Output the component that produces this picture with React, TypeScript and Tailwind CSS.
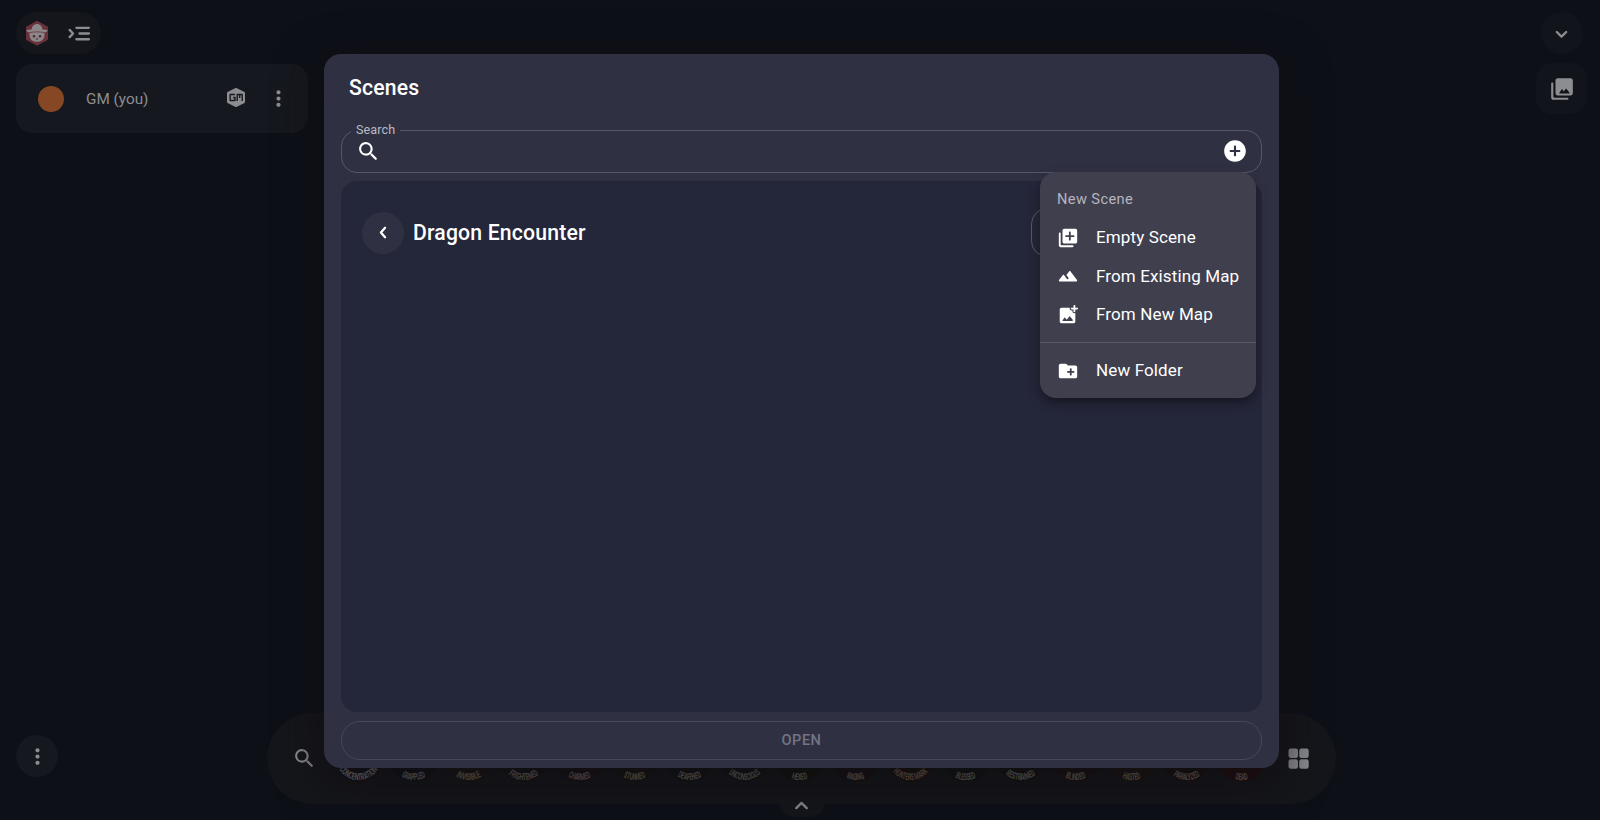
import type { ReactNode } from 'react';

const icons = {
  search:
    'M15.5 14h-.79l-.28-.27c1.2-1.4 1.82-3.31 1.48-5.34-.47-2.78-2.79-5-5.59-5.34-4.23-.52-7.79 3.04-7.27 7.27.34 2.8 2.56 5.12 5.34 5.59 2.03.34 3.94-.28 5.34-1.48l.27.28v.79l4.25 4.25c.41.41 1.08.41 1.49 0 .41-.41.41-1.08 0-1.49L15.5 14zm-6 0C7.01 14 5 11.99 5 9.5S7.01 5 9.5 5 14 7.01 14 9.5 11.99 14 9.5 14z',
  addCircle:
    'M12 2C6.48 2 2 6.48 2 12s4.48 10 10 10 10-4.48 10-10S17.52 2 12 2zm4 11h-3v3c0 .55-.45 1-1 1s-1-.45-1-1v-3H8c-.55 0-1-.45-1-1s.45-1 1-1h3V8c0-.55.45-1 1-1s1 .45 1 1v3h3c.55 0 1 .45 1 1s-.45 1-1 1z',
  libraryAdd:
    'M3 6c-.55 0-1 .45-1 1v13c0 1.1.9 2 2 2h13c.55 0 1-.45 1-1s-.45-1-1-1H5c-.55 0-1-.45-1-1V7c0-.55-.45-1-1-1zm17-4H8c-1.1 0-2 .9-2 2v12c0 1.1.9 2 2 2h12c1.1 0 2-.9 2-2V4c0-1.1-.9-2-2-2zm-2 9h-3v3c0 .55-.45 1-1 1s-1-.45-1-1v-3h-3c-.55 0-1-.45-1-1s.45-1 1-1h3V6c0-.55.45-1 1-1s1 .45 1 1v3h3c.55 0 1 .45 1 1s-.45 1-1 1z',
  terrain:
    'M13.2 7.07L10.25 11l2.25 3c.33.44.24 1.07-.2 1.4-.44.33-1.07.25-1.4-.2-1.05-1.4-2.31-3.07-3.1-4.14-.4-.53-1.2-.53-1.6 0l-4 5.33c-.49.67-.02 1.61.8 1.61h18c.82 0 1.29-.94.8-1.6l-7-9.33c-.4-.54-1.2-.54-1.6 0z',
  addPhoto:
    'M22 4h-2V2c0-.55-.45-1-1-1s-1 .45-1 1v2h-2c-.55 0-1 .45-1 1s.45 1 1 1h2v2c0 .55.45 1 1 1s1-.45 1-1V6h2c.55 0 1-.45 1-1s-.45-1-1-1zM19 10.200c-1.200 0-2.200-1-2.200-2.200v-.800H16c-1.200 0-2.200-1-2.200-2.200 0-.400.100-.700.200-1H5c-1.100 0-2 .9-2 2v13c0 1.100.9 2 2 2h13c1.100 0 2-.9 2-2V9.950c-.300.150-.650.250-1 .250zM16.960 18.500H6.500c-.410 0-.650-.470-.400-.800l2-2.670c.200-.260.600-.260.800 0l1.700 2.270 2.810-3.780c.200-.260.590-.270.790-.010l2.950 3.680c.260.330.030 1.310-.190 1.310z',
  newFolder:
    'M20 6h-8l-1.410-1.410C10.210 4.210 9.700 4 9.170 4H4c-1.110 0-1.990.89-1.990 2L2 18c0 1.110.89 2 2 2h16c1.110 0 2-.89 2-2V8c0-1.110-.89-2-2-2zm-2 8h-2v2c0 .55-.45 1-1 1s-1-.45-1-1v-2h-2c-.55 0-1-.45-1-1s.45-1 1-1h2v-2c0-.55.45-1 1-1s1 .45 1 1v2h2c.55 0 1 .45 1 1s-.45 1-1 1z',
  photoLibrary:
    'M22 16V4c0-1.1-.9-2-2-2H8c-1.100 0-2 .9-2 2v12c0 1.100.9 2 2 2h12c1.100 0 2-.9 2-2zM12.400 12.530l1.230 1.680 1.780-2.320c.200-.250.580-.250.780 0l2.760 3.500c.260.330.030.810-.390.810H10c-.410 0-.650-.470-.400-.800l2-2.870c.200-.260.600-.260.800 0zM2 7v13c0 1.100.9 2 2 2h13c.55 0 1-.45 1-1s-.45-1-1-1H5c-.55 0-1-.45-1-1V7c0-.55-.45-1-1-1s-1 .45-1 1z',
  more: 'M12 8c1.100 0 2-.9 2-2s-.9-2-2-2-2 .9-2 2 .9 2 2 2zm0 2c-1.100 0-2 .9-2 2s.9 2 2 2 2-.9 2-2-.9-2-2-2zm0 6c-1.100 0-2 .9-2 2s.9 2 2 2 2-.9 2-2-.9-2-2-2z',
};

function Icon({ name, size }: { name: keyof typeof icons; size: number }) {
  return (
    <svg width={size} height={size} viewBox="0 0 24 24" fill="currentColor" fillRule="evenodd" className="shrink-0">
      <path d={icons[name]} />
    </svg>
  );
}

function Chevron({ d, size = 25, className = '' }: { d: string; size?: number; className?: string }) {
  return (
    <svg
      width={size}
      height={size}
      viewBox="0 0 24 24"
      fill="none"
      stroke="currentColor"
      strokeWidth="2.2"
      strokeLinecap="round"
      strokeLinejoin="round"
      className={className}
    >
      <path d={d} />
    </svg>
  );
}

function Logo() {
  return (
    <svg width="24" height="26" viewBox="0 0 24 26">
      <path d="M12 2L22 7.500v11.500l-10 5.500L2 19V7.500z" fill="#69323b" stroke="#69323b" strokeWidth="2" strokeLinejoin="round" />
      <path d="M4.500 12h15v3c0 4-3 6.800-7.500 6.800S4.500 19 4.500 15z" fill="#8b8688" />
      <path d="M6.500 10c.3-3.800 2.500-6 5.500-6s5.200 2.200 5.500 6z" fill="#8b8688" />
      <path d="M1.200 10.200c6-1.300 15.600-1.300 21.600 0-1.200 2-3.300 2.900-5 3-3.500-.8-8.100-.8-11.600 0-1.700-.1-3.800-1-5-3z" fill="#8b8688" />
      <path d="M3.500 12.900c5-1.400 12-1.400 17 0" fill="none" stroke="#69323b" strokeWidth=".8" />
      <circle cx="9" cy="16.200" r="1.200" fill="#4a2930" />
      <circle cx="15" cy="16.200" r="1.200" fill="#4a2930" />
      <ellipse cx="12" cy="19" rx="1" ry=".8" fill="#4a2930" />
    </svg>
  );
}

function GmBadge() {
  return (
    <svg width="20" height="21" viewBox="0 0 20 21" className="-mt-[2px]">
      <path d="M10 2l8 4v9l-8 4-8-4V6z" fill="#8c8d90" stroke="#8c8d90" strokeWidth="2" strokeLinejoin="round" />
      <path
        d="M9 7.500H4.200v6H9v-3H7M11.200 14V7.500h5V14M13.700 7.500v3.500"
        fill="none"
        stroke="#17191f"
        strokeWidth="1.400"
        strokeLinejoin="round"
      />
    </svg>
  );
}

const tokens = [
  { label: 'CONCENTRATION', arc: 46, ring: '#101118', ink: '#858588' },
  { label: 'GRAPPLED', arc: 26, ring: '#0f1017', ink: '#77747a' },
  { label: 'INVISIBLE', arc: 27, ring: '#1a1412', ink: '#7d6f5e' },
  { label: 'FRIGHTENED', arc: 33, ring: '#131113', ink: '#787065' },
  { label: 'CHARMED', arc: 24, ring: '#160f13', ink: '#786c6c' },
  { label: 'STUNNED', arc: 24, ring: '#141311', ink: '#787161' },
  { label: 'DEAFENED', arc: 26, ring: '#101114', ink: '#726f6b' },
  { label: 'UNCONSCIOUS', arc: 36, ring: '#0f1015', ink: '#73706b' },
  { label: 'HEXED', arc: 17, ring: '#101310', ink: '#73706b' },
  { label: 'RAGING', arc: 19, ring: '#150f11', ink: '#78716e' },
  { label: 'HUNTERS MARK', arc: 40, ring: '#170f0e', ink: '#826655' },
  { label: 'BLESSED', arc: 22, ring: '#0f1310', ink: '#73706b' },
  { label: 'RESTRAINED', arc: 33, ring: '#101112', ink: '#78756f' },
  { label: 'BLINDED', arc: 22, ring: '#170f12', ink: '#786f6b' },
  { label: 'HASTED', arc: 19, ring: '#1c1410', ink: '#7c6f5f' },
  { label: 'PARALYZED', arc: 29, ring: '#160f0f', ink: '#7c7266' },
  { label: 'DEAD', arc: 13, ring: '#220c10', ink: '#826f68' },
];

type TokenProps = (typeof tokens)[number] & { id: string };

function Token({ label, arc, ring, ink, id }: TokenProps) {
  return (
    <svg width="55.200" height="55.200" viewBox="-27.600 -27.600 55.200 55.200" className="shrink-0">
      <circle r="25" fill={ring} />
      <path id={id} d="M-23.500 0A23.500 23.500 0 0 0 23.500 0" fill="none" />
      <text fill={ink} fontSize="9.500" fontWeight="700" textAnchor="middle" className="font-[Roboto,sans-serif]">
        <textPath href={`#${id}`} startOffset="50%" textLength={arc} lengthAdjust="spacingAndGlyphs">
          {label}
        </textPath>
      </text>
    </svg>
  );
}

function MenuItem({ icon, children }: { icon: keyof typeof icons; children: ReactNode }) {
  return (
    <button className="flex h-[38.300px] w-full items-center gap-[17px] pl-[17px] text-left text-[17px] tracking-[0.130px] whitespace-nowrap text-white">
      <Icon name={icon} size={22} />
      {children}
    </button>
  );
}

function NewSceneMenu() {
  return (
    <div className="absolute top-[172px] left-[1040px] flex h-[226px] w-[216px] flex-col rounded-2xl bg-[#403f4e] pt-[9px] shadow-[0_5px_6px_-2px_rgba(0,0,0,0.3),0_5px_14px_rgba(0,0,0,0.18)]">
      <div className="flex h-[38px] items-center pl-[17px] text-[14.600px] tracking-[0.400px] text-[#b5b5c0]">New Scene</div>
      <MenuItem icon="libraryAdd">Empty Scene</MenuItem>
      <MenuItem icon="terrain">From Existing Map</MenuItem>
      <MenuItem icon="addPhoto">From New Map</MenuItem>
      <div className="mt-2 mb-[9px] h-px w-full shrink-0 bg-[#595968]" />
      <MenuItem icon="newFolder">New Folder</MenuItem>
    </div>
  );
}

function ScenesDialog() {
  return (
    <div className="flex h-[714px] w-[955px] flex-col rounded-[17px] bg-[#2f3143] px-[17px] shadow-[0_12px_40px_8px_rgba(15,14,17,0.7)]">
      <h2 className="flex h-[67px] items-center pt-px pl-2 text-[21.200px] font-medium tracking-[0.150px] text-white">Scenes</h2>

      <fieldset className="flex h-[52px] flex-col rounded-2xl border border-[#565869] px-[7px]">
        <legend className="ml-[2px] h-[19px] px-[5px] text-[12.600px] leading-[17px] tracking-[0.100px] text-[#b9bac3]">
          Search
        </legend>
        <div className="-mt-[2px] flex items-center justify-between pr-[6px] pl-[7px] text-white">
          <Icon name="search" size={25} />
          <Icon name="addCircle" size={26} />
        </div>
      </fieldset>

      <section className="mt-[8px] h-[531px] overflow-hidden rounded-2xl bg-[#242639] pt-[27px] pl-[21px]">
        <div className="flex items-center justify-between">
          <div className="flex items-center">
            <button className="flex size-[42px] items-center justify-center rounded-full bg-[#2f3143] text-white">
              <Chevron d="M13.500 7.500L9.500 12l4 4.500" />
            </button>
            <h3 className="mt-px ml-[9px] text-[21.200px] font-medium tracking-[0.180px] text-white">Dragon Encounter</h3>
          </div>
          <div className="mr-[20px] h-[49px] w-[211px] rounded-2xl border border-[#565869]" />
        </div>
      </section>

      <button className="mt-[9px] flex h-[39px] shrink-0 items-center justify-center rounded-[19px] border border-[#45475a] text-[14.600px] font-medium tracking-[0.450px] text-[#737482]">
        OPEN
      </button>
    </div>
  );
}

export default function App() {
  return (
    <div className="relative flex h-[820px] w-[1600px] flex-col justify-between overflow-hidden bg-[#0e1018] font-[Roboto,sans-serif] text-[#8c8d90]">
      <div className="flex justify-between pt-[12px] pr-[13px] pl-4">
        <div className="flex flex-col gap-[10px]">
          <div className="flex h-[42px] w-[85px] items-center gap-[18px] rounded-full bg-[#14161c] pl-[9px]">
            <Logo />
            <Chevron d="M2.500 8.500L5.800 12l-3.300 3.500M9 6.500H21M12 12H21M9 17.500H21" />
          </div>
          <div className="flex h-[69px] w-[292px] items-center rounded-2xl bg-[#16181f] pl-[22px]">
            <div className="size-[26px] rounded-full bg-[#864724]" />
            <span className="mt-px ml-[22px] w-[140px] text-[15.300px]">GM (you)</span>
            <GmBadge />
            <div className="-mt-px ml-[19.500px]">
              <Icon name="more" size={25} />
            </div>
          </div>
        </div>

        <div className="flex flex-col items-center gap-[9px]">
          <button className="flex size-[42px] items-center justify-center rounded-full bg-[#12141b]">
            <Chevron d="M7.500 10.500l4.500 4.500 4.500-4.500" />
          </button>
          <button className="flex size-[51px] items-center justify-center rounded-2xl bg-[#12141b]">
            <Icon name="photoLibrary" size={26} />
          </button>
        </div>
      </div>

      <div className="flex items-start pl-4">
        <button className="mt-[22px] flex size-[42px] items-center justify-center rounded-full bg-[#16181f]">
          <Icon name="more" size={25} />
        </button>
        <div className="ml-[209px] flex flex-col items-center">
          <div className="flex h-[91px] w-[1069px] items-center justify-between rounded-full bg-[#15161b] pr-[24px] pl-[25px]">
            <Icon name="search" size={25} />
            <div className="-mt-[4px] mr-[2px] flex">
              {tokens.map((t, i) => (
                <Token key={t.label} id={`arc-${i}`} {...t} />
              ))}
            </div>
            <svg width="27" height="27" viewBox="0 0 27 27" fill="currentColor">
              <rect x="3.500" y="3.500" width="9.500" height="9.500" rx="2.200" />
              <rect x="14.200" y="3.500" width="9.500" height="9.500" rx="2.200" />
              <rect x="3.500" y="14.200" width="9.500" height="9.500" rx="2.200" />
              <rect x="14.200" y="14.200" width="9.500" height="9.500" rx="2.200" />
            </svg>
          </div>
          <button className="mb-[3px] flex h-[13px] w-[44px] items-center justify-center rounded-b-[14px] bg-[#15161b]">
            <Chevron d="M7 14.500l5-5 5 5" className="-mt-[10px] shrink-0" />
          </button>
        </div>
      </div>

      <div className="absolute inset-0 flex items-start pt-[54px] pl-[324px]">
        <ScenesDialog />
      </div>
      <NewSceneMenu />
    </div>
  );
}
